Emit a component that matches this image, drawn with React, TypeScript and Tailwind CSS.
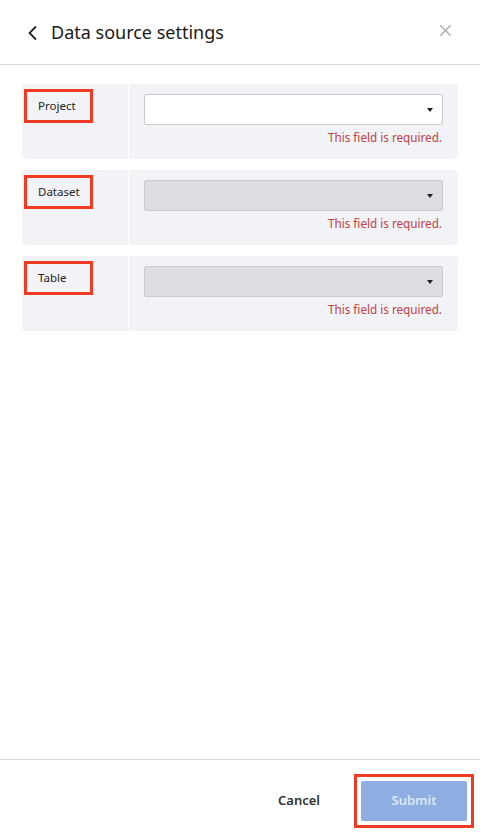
import { X } from "lucide-react";

const fields = [
  { label: "Project", disabled: false },
  { label: "Dataset", disabled: true },
  { label: "Table", disabled: true },
];

function FieldRow({ label, disabled }: { label: string; disabled: boolean }) {
  return (
    <div className="flex h-[75px] rounded bg-[#f2f3f7]">
      <div className="w-[107px] shrink-0 border-r border-r-white pl-[2px] pt-[5px]">
        <div className="flex h-[34px] w-[69px] items-center border-[3px] border-[#ee3b22] pl-[11px] text-[11.5px] text-[#222]">
          {label}
        </div>
      </div>
      <div className="flex flex-1 flex-col items-end pl-[15px] pr-[15px] pt-[10px]">
        <div
          className={
            "flex h-[31px] w-full items-center justify-end rounded-[2px] border border-[#c9cbcf] pr-[9px] " +
            (disabled ? "bg-[#dcdee1]" : "bg-white")
          }
        >
          <svg width="6" height="4" viewBox="0 0 6 4">
            <path d="M0 0h6L3 4z" fill="#222" />
          </svg>
        </div>
        <p className="mt-[4px] pr-[1px] text-[11.7px] text-[#c4413f]">This field is required.</p>
      </div>
    </div>
  );
}

export default function App() {
  return (
    <div className="flex h-[837px] w-[480px] flex-col bg-white font-['Noto_Sans',sans-serif]">
      <header className="flex h-[65px] shrink-0 items-center border-b border-b-[#d9d9d9] pl-[27px] pr-[25px]">
        <svg width="11" height="16" viewBox="0 0 11 16" className="mt-[1px]">
          <path d="M9 1.5 2.5 8 9 14.5" fill="none" stroke="#222" strokeWidth="1.8" />
        </svg>
        <h1 className="ml-[13px] text-[18px] text-[#1a1a1a]">Data source settings</h1>
        <X className="ml-auto mt-[-3px] h-[19px] w-[19px] text-[#a5a5a5]" strokeWidth={1.5} />
      </header>
      <main className="flex flex-1 flex-col gap-[11px] px-[22px] pt-[19px]">
        {fields.map((f) => (
          <FieldRow key={f.label} label={f.label} disabled={f.disabled} />
        ))}
      </main>
      <footer className="flex h-[78px] shrink-0 items-start justify-end border-t border-t-[#d9d9d9] pr-[6px] pt-[14px]">
        <button className="mr-[34px] mt-[17px] text-[13px] font-semibold text-[#333]">Cancel</button>
        <div className="border-[3px] border-[#ee3b22] p-[4px]">
          <button className="h-[40px] w-[106px] rounded-[2px] bg-[#8eaee2] text-[13px] font-semibold text-[#dde6f6]">
            Submit
          </button>
        </div>
      </footer>
    </div>
  );
}
